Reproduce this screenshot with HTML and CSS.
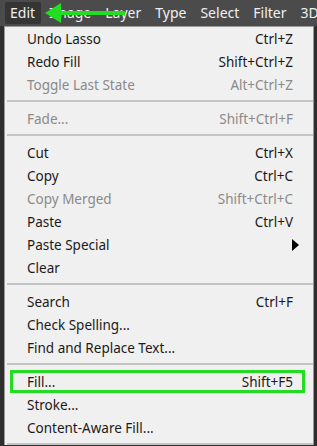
FILE: index.html
```html
<!DOCTYPE html>
<html lang="en">

<head>
    <meta charset="UTF-8">
    <title>Edit menu</title>
    <link rel="stylesheet" href="styles.css">
</head>

<body>
    <div class="menubar">
        <span class="menubar-item active">Edit</span>
        <span class="menubar-item">Image</span>
        <span class="menubar-item">Layer</span>
        <span class="menubar-item">Type</span>
        <span class="menubar-item">Select</span>
        <span class="menubar-item">Filter</span>
        <span class="menubar-item">3D</span>

        <!-- green pointer arrow -->
        <svg class="pointer" width="84" height="24" viewBox="0 0 84 24">
            <path d="M14 12 H82" stroke="#22dd22" stroke-width="4" />
            <path d="M2 12 L18 2 L18 22 Z" fill="#22dd22" />
        </svg>
    </div>

    <div class="menu">
        <div class="row"><span>Undo Lasso</span><span>Ctrl+Z</span></div>
        <div class="row"><span>Redo Fill</span><span>Shift+Ctrl+Z</span></div>
        <div class="row disabled"><span>Toggle Last State</span><span>Alt+Ctrl+Z</span></div>
        <div class="sep"></div>
        <div class="row disabled"><span>Fade...</span><span>Shift+Ctrl+F</span></div>
        <div class="sep"></div>
        <div class="row"><span>Cut</span><span>Ctrl+X</span></div>
        <div class="row"><span>Copy</span><span>Ctrl+C</span></div>
        <div class="row disabled"><span>Copy Merged</span><span>Shift+Ctrl+C</span></div>
        <div class="row"><span>Paste</span><span>Ctrl+V</span></div>
        <div class="row"><span>Paste Special</span><span class="submenu"></span></div>
        <div class="row"><span>Clear</span><span></span></div>
        <div class="sep"></div>
        <div class="row"><span>Search</span><span>Ctrl+F</span></div>
        <div class="row"><span>Check Spelling...</span><span></span></div>
        <div class="row"><span>Find and Replace Text...</span><span></span></div>
        <div class="sep"></div>
        <div class="row marked"><span>Fill...</span><span>Shift+F5</span></div>
        <div class="row"><span>Stroke...</span><span></span></div>
        <div class="row"><span>Content-Aware Fill...</span><span></span></div>
        <div class="sep"></div>
    </div>
</body>

</html>
```

FILE: styles.css
```css
body {
    margin: 0;
    background-color: #2e2e2e;
    font-family: "Noto Sans", "Open Sans", sans-serif;
    height: 446px;
    overflow: hidden;
}

.menubar {
    position: relative;
    display: flex;
    align-items: center;
    height: 26px;
    padding-left: 5px;
    background-color: #4b4b4b;
    font-size: 14px;
    color: #f0f0f0;
    white-space: nowrap;
    overflow: hidden;
}

.menubar-item {
    padding: 0 6px 0 5px;
    line-height: 22px;
    margin-right: 3px;
}

.menubar-item.active {
    background-color: #353535;
    border-radius: 2px;
}

.pointer {
    position: absolute;
    left: 43px;
    top: 1px;
}

.menu {
    margin-left: 4px;
    width: 308px;
    background-color: #f0f0f0;
    border-left: 1px solid #9a9a9a;
    border-right: 1px solid #9a9a9a;
    border-top: 1px solid #9a9a9a;
    font-size: 13.5px;
    color: #1a1a1a;
}

.row {
    display: flex;
    justify-content: space-between;
    align-items: center;
    height: 23px;
    padding: 0 20px 0 22px;
}

.row.disabled {
    color: #8a8a8a;
}

.row.marked {
    margin: 0 8px 0 5px;
    padding: 0 9px 0 14px;
    height: 17px;
    border: 3px solid #22dd22;
}

.submenu {
    width: 0;
    height: 0;
    margin-right: -6px;
    border-top: 6px solid transparent;
    border-bottom: 6px solid transparent;
    border-left: 7px solid #000;
}

.sep {
    height: 2px;
    margin: 4px 0 5px 2px;
    background-color: #c4c4c4;
}
```
